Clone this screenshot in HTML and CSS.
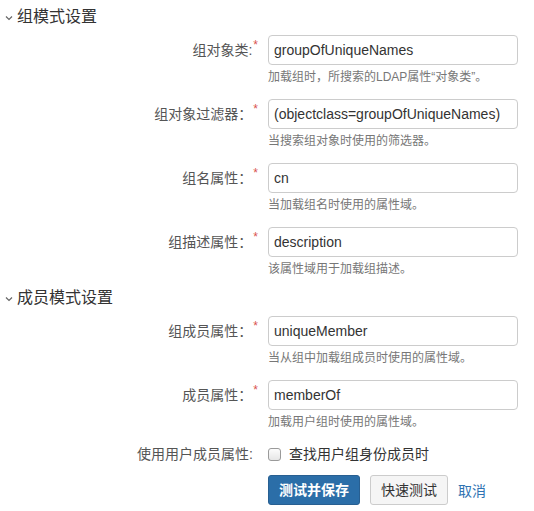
FILE: index.html
```html
<!DOCTYPE html>
<html lang="zh-CN">
<head>
<meta charset="utf-8">
<title>LDAP 组设置</title>
<link rel="stylesheet" href="styles.css">
</head>
<body>
<div class="page">
  <section class="section">
    <h2 class="section-title"><svg class="chev" width="8" height="6" viewBox="0 0 8 6"><polyline points="1,1.5 4,4.5 7,1.5" fill="none" stroke="#666" stroke-width="1.2"/></svg>组模式设置</h2>
    <div class="rows">
      <div class="row">
        <label class="label">组对象类:<span class="req">*</span></label>
        <div class="field">
          <div class="input">groupOfUniqueNames</div>
          <div class="help">加载组时，所搜索的LDAP属性“对象类”。</div>
        </div>
      </div>
      <div class="row">
        <label class="label">组对象过滤器：<span class="req">*</span></label>
        <div class="field">
          <div class="input">(objectclass=groupOfUniqueNames)</div>
          <div class="help">当搜索组对象时使用的筛选器。</div>
        </div>
      </div>
      <div class="row">
        <label class="label">组名属性：<span class="req">*</span></label>
        <div class="field">
          <div class="input">cn</div>
          <div class="help">当加载组名时使用的属性域。</div>
        </div>
      </div>
      <div class="row">
        <label class="label">组描述属性：<span class="req">*</span></label>
        <div class="field">
          <div class="input">description</div>
          <div class="help">该属性域用于加载组描述。</div>
        </div>
      </div>
    </div>
  </section>
  <section class="section">
    <h2 class="section-title"><svg class="chev" width="8" height="6" viewBox="0 0 8 6"><polyline points="1,1.5 4,4.5 7,1.5" fill="none" stroke="#666" stroke-width="1.2"/></svg>成员模式设置</h2>
    <div class="rows">
      <div class="row">
        <label class="label">组成员属性：<span class="req">*</span></label>
        <div class="field">
          <div class="input">uniqueMember</div>
          <div class="help">当从组中加载组成员时使用的属性域。</div>
        </div>
      </div>
      <div class="row">
        <label class="label">成员属性：<span class="req">*</span></label>
        <div class="field">
          <div class="input">memberOf</div>
          <div class="help">加载用户组时使用的属性域。</div>
        </div>
      </div>
      <div class="row row-check">
        <label class="label label-plain">使用用户成员属性:</label>
        <div class="field check-field">
          <span class="checkbox"></span>
          <span class="check-text">查找用户组身份成员时</span>
        </div>
      </div>
      <div class="row row-buttons">
        <div></div>
        <div class="buttons">
          <button class="btn btn-primary">测试并保存</button>
          <button class="btn btn-default">快速测试</button>
          <a class="cancel">取消</a>
        </div>
      </div>
    </div>
  </section>
</div>
</body>
</html>
```
FILE: styles.css
```css
* { box-sizing: border-box; }
html, body { margin: 0; padding: 0; background: #fff; }
body {
  font-family: "Liberation Sans", "Noto Sans CJK SC", sans-serif;
  color: #333;
  font-size: 14px;
}
.page {
  padding-top: 5px;
  display: flex;
  flex-direction: column;
  gap: 8px;
}
.section-title {
  margin: 0 0 6px 0;
  font-size: 16px;
  font-weight: normal;
  line-height: 24px;
  height: 24px;
  color: #333;
  display: flex;
  align-items: center;
  padding-left: 5px;
  gap: 4px;
}
.chev { display: block; margin-top: 1px; }
.rows {
  display: flex;
  flex-direction: column;
  gap: 13px;
}
.row {
  display: grid;
  grid-template-columns: 258px 250px;
  column-gap: 10px;
}
.label {
  text-align: right;
  line-height: 30px;
  color: #555;
  font-size: 14px;
  white-space: nowrap;
}
.label-plain { padding-right: 5px; line-height: 20px; }
.req {
  color: #d9534f;
  font-size: 12px;
  vertical-align: super;
  line-height: 0;
  margin-left: 1px;
}
.input {
  height: 30px;
  border: 1px solid #ccc;
  border-radius: 4px;
  padding: 0 5px;
  line-height: 28px;
  font-size: 14px;
  color: #333;
  white-space: nowrap;
  overflow: hidden;
}
.help {
  margin-top: 4px;
  line-height: 17px;
  font-size: 12px;
  color: #777;
  white-space: nowrap;
}
.check-field {
  display: flex;
  align-items: center;
  height: 20px;
  gap: 8px;
}
.checkbox {
  width: 13px;
  height: 13px;
  border: 1px solid #9a9a9a;
  border-radius: 3px;
  background: linear-gradient(#fcfcfc, #e6e6e6);
  flex: none;
}
.check-text { color: #333; font-size: 14px; line-height: 20px; }
.row-buttons { margin-top: -2px; }
.buttons {
  display: flex;
  align-items: center;
  gap: 10px;
}
.btn {
  height: 30px;
  padding: 0 10px;
  font-family: inherit;
  font-size: 14px;
  border-radius: 3px;
  border: 1px solid transparent;
  line-height: 28px;
}
.btn-primary {
  background: #2b6ea8;
  border-color: #285f91;
  color: #fff;
  font-weight: bold;
}
.btn-default {
  background: #f5f5f5;
  border-color: #ccc;
  color: #333;
}
.cancel { color: #2f73b2; font-size: 14px; }
```
